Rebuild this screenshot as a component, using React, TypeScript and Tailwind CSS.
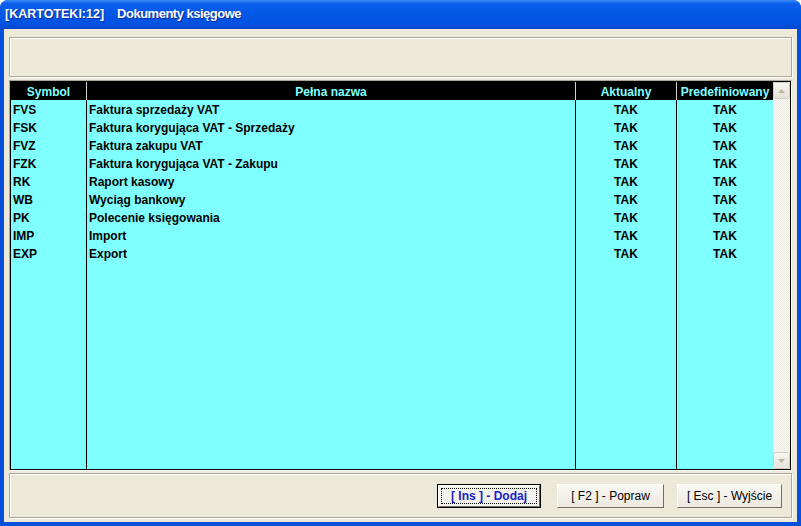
const rows = [
  ['FVS', 'Faktura sprzedaży VAT'],
  ['FSK', 'Faktura korygująca VAT - Sprzedaży'],
  ['FVZ', 'Faktura zakupu VAT'],
  ['FZK', 'Faktura korygująca VAT - Zakupu'],
  ['RK', 'Raport kasowy'],
  ['WB', 'Wyciąg bankowy'],
  ['PK', 'Polecenie księgowania'],
  ['IMP', 'Import'],
  ['EXP', 'Export'],
]

function ScrollArrow({ down }: { down?: boolean }) {
  return (
    <div className="h-[17px] shrink-0 rounded-[2px] border border-[#D2CEC1] bg-[linear-gradient(to_bottom,#F7F6F1,#E6E3D6)] flex items-center justify-center">
      <svg width="7" height="4" viewBox="0 0 7 4">
        <path d={down ? 'M0 0H7L3.5 4Z' : 'M0 4H7L3.5 0Z'} fill="#B9B5A7" />
      </svg>
    </div>
  )
}

export default function App() {
  return (
    <div className="w-[801px] h-[526px] flex flex-col bg-[#0850DC] rounded-t-[8px] overflow-hidden font-['Liberation_Sans',Arial,sans-serif]">
      {/* Title bar */}
      <div className="h-[29px] shrink-0 flex items-center pl-[5px] pb-[1px] bg-[linear-gradient(to_bottom,#3D8BF7_0%,#0C60EC_12%,#0357E6_45%,#0153E2_80%,#0145CF_100%)] text-white font-bold [text-shadow:1px_1px_0_#0A2A9C]">
        <span className="text-[12.5px]">[KARTOTEKI:12]</span>
        <span className="ml-[13px] text-[13px] tracking-[-0.5px]">Dokumenty księgowe</span>
      </div>

      {/* Body */}
      <div className="flex-1 mx-[4px] mb-[4px] bg-[#ECE9D8] flex flex-col px-[5px] pt-[8px] pb-[4px]">
        <div className="h-[40px] shrink-0 border border-[#ACA899] shadow-[1px_1px_0_#fff,inset_1px_1px_0_#fff]" />

        {/* Grid */}
        <div className="mt-[3px] h-[391px] shrink-0 border-t border-l border-[#ACA899] border-r border-r-white border-b border-b-white">
          <div className="h-full border border-black flex">
            <div className="flex-1 flex flex-col min-w-0">
              <div className="h-[18px] shrink-0 grid grid-cols-[76px_489px_101px_1fr] bg-black text-[#80FFFF] font-bold text-[12px] leading-[18px] text-center">
                <div className="border-r border-[#D4D0C8] pt-px">Symbol</div>
                <div className="border-r border-[#D4D0C8] pt-px">Pełna nazwa</div>
                <div className="border-r border-[#D4D0C8] pt-px">Aktualny</div>
                <div className="pt-px">Predefiniowany</div>
              </div>
              <div className="flex-1 grid grid-cols-[76px_489px_101px_1fr] bg-[#80FFFF] text-black font-bold text-[12px] leading-[18px]">
                <div className="border-r border-black pl-[2px] pt-px">
                  {rows.map(([s]) => (
                    <div key={s} className="h-[18px]">{s}</div>
                  ))}
                </div>
                <div className="border-r border-black pl-[2px] pt-px">
                  {rows.map(([s, n]) => (
                    <div key={s} className="h-[18px]">{n}</div>
                  ))}
                </div>
                <div className="border-r border-black text-center pt-px">
                  {rows.map(([s]) => (
                    <div key={s} className="h-[18px]">TAK</div>
                  ))}
                </div>
                <div className="text-center pt-px">
                  {rows.map(([s]) => (
                    <div key={s} className="h-[18px]">TAK</div>
                  ))}
                </div>
              </div>
            </div>

            {/* Scrollbar */}
            <div className="w-[17px] shrink-0 flex flex-col bg-[#F4F3EE]">
              <ScrollArrow />
              <div className="flex-1 bg-[repeating-conic-gradient(#FBFAF7_0_25%,#ECEADF_0_50%)] bg-[length:2px_2px]" />
              <ScrollArrow down />
            </div>
          </div>
        </div>

        {/* Footer */}
        <div className="mt-[2px] h-[45px] shrink-0 border border-[#ACA899] shadow-[1px_1px_0_#fff,inset_1px_1px_0_#fff] flex justify-end items-start pt-[10px] pr-[9px] text-[12px]">
          <button className="w-[104px] h-[24px] border border-black bg-[#F3F2EC]">
            <div className="h-full border border-t-white border-l-white border-r-[#716F64] border-b-[#716F64] flex items-center justify-center p-[2px]">
              <div className="w-full h-full border border-dotted border-black flex items-center justify-center font-bold text-[#1C1CCB]">
                [ Ins ] - Dodaj
              </div>
            </div>
          </button>
          <button className="ml-[16px] w-[107px] h-[24px] border border-t-white border-l-white border-r-[#716F64] border-b-[#716F64] bg-[linear-gradient(to_bottom,#F8F7F3,#ECE9DF)] text-black">
            <span className="whitespace-pre">[ F2 ] - Popraw</span>
          </button>
          <button className="ml-[13px] w-[105px] h-[24px] border border-t-white border-l-white border-r-[#716F64] border-b-[#716F64] bg-[linear-gradient(to_bottom,#F8F7F3,#ECE9DF)] text-black">
            <span className="whitespace-pre">[ Esc ] - Wyjście</span>
          </button>
        </div>
      </div>
    </div>
  )
}
